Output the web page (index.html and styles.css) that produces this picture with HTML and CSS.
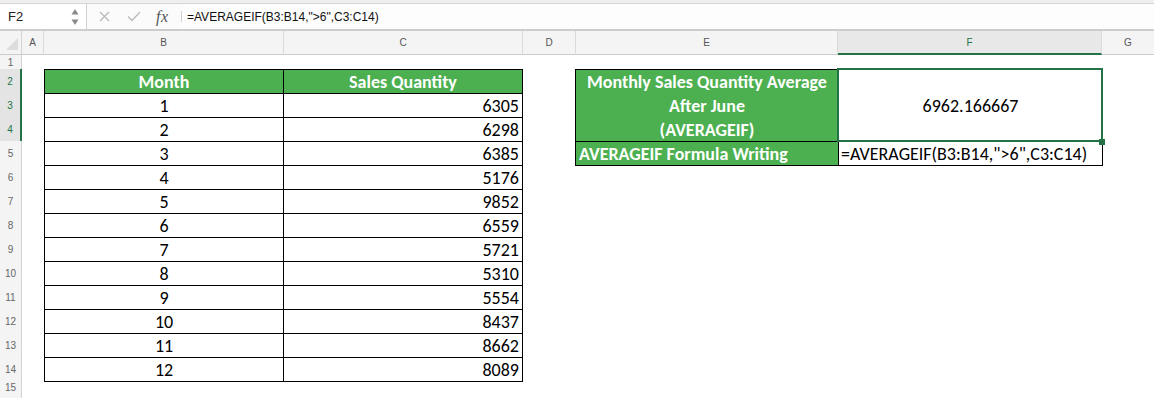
FILE: index.html
```html
<!DOCTYPE html>
<html>
<head>
<meta charset="utf-8">
<link rel="stylesheet" href="styles.css">
</head>
<body>
<div class="app">
  <div class="fbar">
    <div class="fb-row">
      <div class="namebox">
        <span class="nb-text">F2</span>
        <svg class="nb-arrows" width="8" height="18" viewBox="0 0 8 18"><path d="M4 1 L7.5 6.5 L0.5 6.5 Z" fill="#8a8a8a"/><path d="M4 17 L7.5 11.5 L0.5 11.5 Z" fill="#8a8a8a"/></svg>
      </div>
      <div class="fb-tools">
        <svg class="ic-x" width="11" height="11" viewBox="0 0 11 11"><path d="M1 1 L10 10 M10 1 L1 10" stroke="#b9b9b9" stroke-width="1.3" fill="none"/></svg>
        <svg class="ic-check" width="14" height="11" viewBox="0 0 14 11"><path d="M1 5.5 L5 9.5 L13 1" stroke="#b9b9b9" stroke-width="1.3" fill="none"/></svg>
        <span class="fx">fx</span>
        <span class="fb-div"></span>
      </div>
      <div class="fb-input">=AVERAGEIF(B3:B14,"&gt;6",C3:C14)</div>
    </div>
  </div>
  <div class="sheet">
    <div class="corner"></div>
    <div class="ch">A</div>
    <div class="ch">B</div>
    <div class="ch">C</div>
    <div class="ch">D</div>
    <div class="ch">E</div>
    <div class="ch sel">F</div>
    <div class="ch last">G</div>

    <div class="rh">1</div>
    <div class="rh sel">2</div>
    <div class="rh sel">3</div>
    <div class="rh sel">4</div>
    <div class="rh">5</div>
    <div class="rh">6</div>
    <div class="rh">7</div>
    <div class="rh">8</div>
    <div class="rh">9</div>
    <div class="rh">10</div>
    <div class="rh">11</div>
    <div class="rh">12</div>
    <div class="rh">13</div>
    <div class="rh">14</div>
    <div class="rh end">15</div>

    <div class="t1">
      <div class="hd">Month</div><div class="hd">Sales Quantity</div>
      <div class="c">1</div><div class="r">6305</div>
      <div class="c">2</div><div class="r">6298</div>
      <div class="c">3</div><div class="r">6385</div>
      <div class="c">4</div><div class="r">5176</div>
      <div class="c">5</div><div class="r">9852</div>
      <div class="c">6</div><div class="r">6559</div>
      <div class="c">7</div><div class="r">5721</div>
      <div class="c">8</div><div class="r">5310</div>
      <div class="c">9</div><div class="r">5554</div>
      <div class="c">10</div><div class="r">8437</div>
      <div class="c">11</div><div class="r">8662</div>
      <div class="c">12</div><div class="r">8089</div>
    </div>

    <div class="t2">
      <div class="big">Monthly Sales Quantity Average<br>After June<br>(AVERAGEIF)</div>
      <div class="val">6962.166667</div>
      <div class="lbl">AVERAGEIF Formula Writing</div>
      <div class="frm">=AVERAGEIF(B3:B14,"&gt;6",C3:C14)</div>
      <div class="selbox"></div>
      <div class="handle"></div>
    </div>
  </div>
</div>
</body>
</html>
```

FILE: styles.css
```css
* { box-sizing: border-box; }
html, body { margin: 0; padding: 0; background: #fff; }
body {
  width: 1154px;
  height: 398px;
  overflow: hidden;
  font-family: "Liberation Sans", Arial, sans-serif;
}

/* formula bar */
.fbar {
  height: 31px;
  border-top: 3px solid #efefef;
  background: #fbfbfb;
}
.fb-row {
  height: 28px;
  display: flex;
  border-top: 1px solid #d6d6d6;
  border-bottom: 2px solid #cdcdcd;
}
.namebox {
  width: 87px;
  background: #fff;
  border-right: 1px solid #d2d2d2;
  display: flex;
  align-items: center;
  padding-left: 8px;
  padding-right: 7px;
  font-size: 13px;
  color: #222;
}
.nb-arrows { margin-left: auto; }
.fb-tools {
  width: 95px;
  display: flex;
  align-items: center;
  padding-left: 12px;
}
.ic-check { margin-left: 17px; }
.fx {
  margin-left: 15px;
  font-family: "Liberation Serif", "Times New Roman", serif;
  font-style: italic;
  font-size: 16px;
  color: #555;
  letter-spacing: 0.5px;
}
.fb-div {
  margin-left: auto;
  width: 1px;
  height: 11px;
  background: #cfcfcf;
}
.fb-input {
  flex: 1;
  display: flex;
  align-items: center;
  padding-left: 5px;
  font-size: 12px;
  color: #111;
  background: #fdfdfd;
}

/* sheet */
.sheet {
  height: 367px;
  display: grid;
  grid-template-columns: 22px 22px 240px 239px 53px 262px 264px 1fr;
  grid-template-rows: 24px 14px repeat(13, 24px) 1fr;
}
.corner {
  position: relative;
  background: #f4f4f4;
  border-right: 1px solid #d3d3d3;
  border-bottom: 1px solid #cbcbcb;
}
.corner::after {
  content: "";
  position: absolute;
  right: 3px;
  bottom: 4px;
  width: 0;
  height: 0;
  border-left: 12px solid transparent;
  border-bottom: 12px solid #dcdcdc;
}
.ch {
  background: #f4f4f4;
  border-right: 1px solid #dadada;
  border-bottom: 1px solid #cbcbcb;
  display: flex;
  align-items: center;
  justify-content: center;
  font-size: 10px;
  color: #555;
}
.ch.sel {
  background: #e8e8e8;
  color: #227447;
  border-bottom: 2px solid #227447;
}
.ch.last { border-right: none; }
.rh {
  grid-column: 1;
  background: #f4f4f4;
  border-right: 1px solid #d3d3d3;
  display: flex;
  align-items: center;
  justify-content: center;
  font-size: 10px;
  color: #666;
}
.rh.sel {
  background: #e4e4e4;
  color: #227447;
  border-right: 2px solid #227447;
}
.rh.end {
  align-items: flex-start;
  line-height: 14px;
}

/* data tables */
.t1, .t2 {
  font-family: Carlito, Lato, "Noto Sans", sans-serif;
  font-size: 18px;
  color: #000;
  border-top: 1px solid #000;
  border-left: 1px solid #000;
}
.t1 > div, .t2 > div {
  border-right: 1px solid #000;
  border-bottom: 1px solid #000;
  display: flex;
  align-items: center;
  white-space: nowrap;
}
.t1 {
  grid-column: 3 / 5;
  grid-row: 3 / 16;
  align-self: start;
  display: grid;
  grid-template-columns: 239px 239px;
  grid-auto-rows: 24px;
}
.hd {
  background: #4caf50;
  color: #fff;
  font-weight: 700;
  justify-content: center;
}
.c { justify-content: center; }
.r { justify-content: flex-end; padding-right: 3px; }

.t2 {
  grid-column: 6 / 8;
  grid-row: 3 / 7;
  margin-left: -1px;
  width: 528px;
  align-self: start;
  position: relative;
  display: grid;
  grid-template-columns: 263px 264px;
  grid-template-rows: 72px 24px;
}
.t2 > .big {
  background: #4caf50;
  color: #fff;
  font-weight: 700;
  justify-content: center;
  text-align: center;
  line-height: 24px;
}
.t2 > .val { justify-content: center; }
.t2 > .lbl {
  background: #4caf50;
  color: #fff;
  font-weight: 700;
  padding-left: 3px;
}
.t2 > .frm { padding-left: 2px; }
.t2 > .selbox {
  position: absolute;
  left: 261px;
  top: -2px;
  width: 266px;
  height: 74px;
  border: 2px solid #227447;
}
.t2 > .handle {
  position: absolute;
  left: 523px;
  top: 69px;
  width: 6px;
  height: 6px;
  background: #227447;
  border: none;
}
```
